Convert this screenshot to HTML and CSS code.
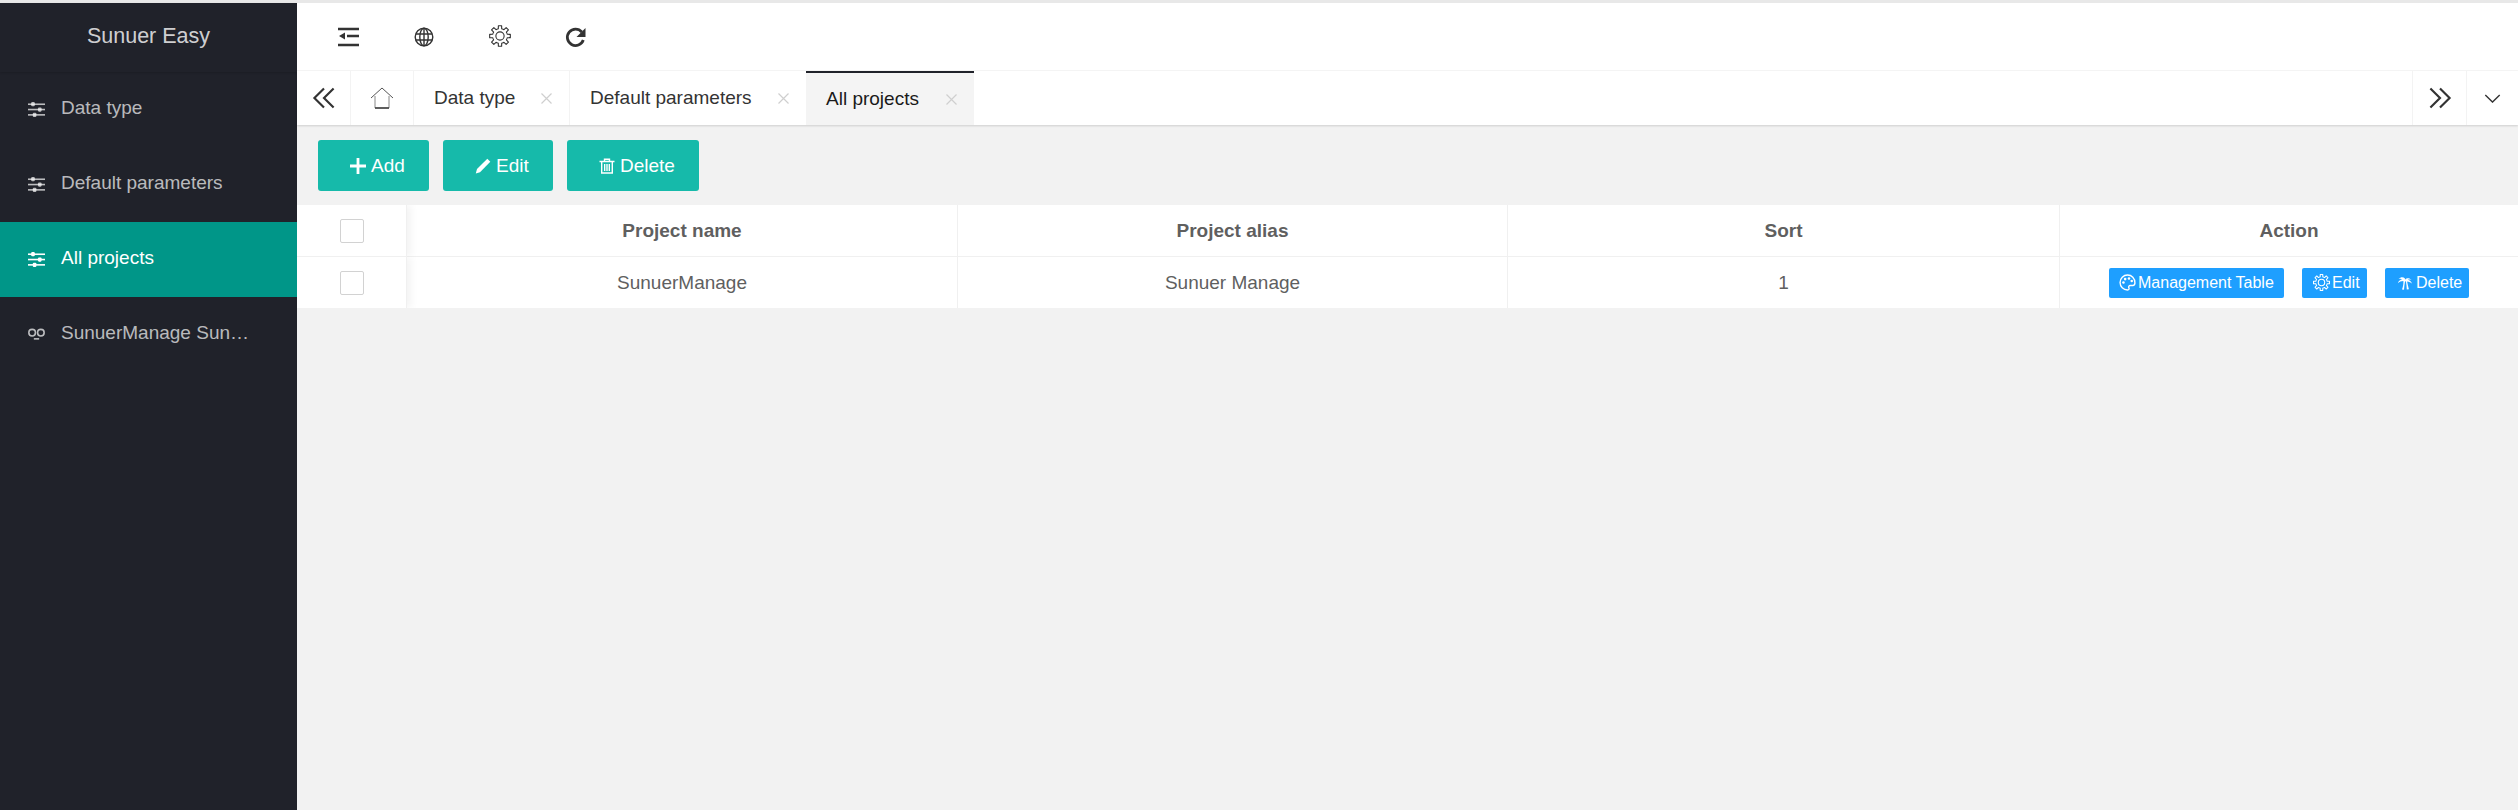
FILE: index.html
```html
<!DOCTYPE html>
<html lang="en">
<head>
<meta charset="utf-8">
<title>Sunuer Easy</title>
<link rel="stylesheet" href="styles.css">
</head>
<body>
<svg class="defs" aria-hidden="true"><defs>
  <symbol id="sliders" viewBox="0 0 16 16"><g fill="currentColor"><rect x="0" y="2.300" width="16" height="1.500"/><rect x="0" y="7.300" width="16" height="1.500"/><rect x="0" y="12.300" width="16" height="1.500"/><rect x="3" y="1" width="3.400" height="4" rx="1"/><rect x="9.400" y="6" width="3.400" height="4" rx="1"/><rect x="4.500" y="11" width="3.400" height="4" rx="1"/></g></symbol>
  <symbol id="gear" viewBox="0 0 24 24"><g transform="translate(12 12)" stroke-linejoin="round">
    <circle r="4.500"/>
    <path id="tooth" d="M-3.060-7.390L-1.840-7.990L-1.780-11.260L1.780-11.260L1.840-7.990L3.060-7.390"/>
    <use href="#tooth" transform="rotate(45)"/><use href="#tooth" transform="rotate(90)"/><use href="#tooth" transform="rotate(135)"/><use href="#tooth" transform="rotate(180)"/><use href="#tooth" transform="rotate(225)"/><use href="#tooth" transform="rotate(270)"/><use href="#tooth" transform="rotate(315)"/>
  </g></symbol>
  <symbol id="close" viewBox="0 0 11 11"><path d="M.5.500l10 10M10.500.500l-10 10" fill="none" stroke="#cfcfcf" stroke-width="1.200"/></symbol>
</defs></svg>
<div class="app">
  <aside class="side">
    <div class="logo">Sunuer Easy</div>
    <nav class="menu">
      <a class="item"><svg class="mi" viewBox="0 0 16 16"><use href="#sliders"/></svg><span class="lbl">Data type</span></a>
      <a class="item"><svg class="mi" viewBox="0 0 16 16"><use href="#sliders"/></svg><span class="lbl">Default parameters</span></a>
      <a class="item on"><svg class="mi" viewBox="0 0 16 16"><use href="#sliders"/></svg><span class="lbl">All projects</span></a>
      <a class="item"><svg class="mi" viewBox="0 0 16 16"><g fill="none" stroke="currentColor" stroke-width="1.500"><circle cx="3.900" cy="6.300" r="3.100"/><circle cx="12.100" cy="6.300" r="3.100"/><path d="M5.500 12.100h5"/></g></svg><span class="lbl">SunuerManage Sun…</span></a>
    </nav>
  </aside>
  <main class="main">
    <header class="top">
      <svg class="ti" viewBox="0 0 22 22"><path d="M1 4h21M10 11h12M1 20h21" fill="none" stroke="#333" stroke-width="2.300"/><path d="M2 11l6-3.500v7z" fill="#333"/></svg>
      <svg class="ti" viewBox="0 0 22 22"><g fill="none" stroke="#333" stroke-width="1.400"><circle cx="11" cy="12" r="8.800"/><ellipse cx="11" cy="12" rx="4.200" ry="8.800"/><path d="M11 3v18M3 9h16M3 15h16"/></g></svg>
      <svg class="ti gear-top" viewBox="0 0 22 22"><use href="#gear" width="22" height="22"/></svg>
      <svg class="ti" viewBox="0 0 22 22"><path d="M18.300 15A8.200 8.200 0 1 1 16.800 7" fill="none" stroke="#333" stroke-width="2.800"/><path d="M20.500 3v9h-9z" fill="#333"/></svg>
    </header>
    <div class="tabs">
      <button class="tb first"><svg class="arrows" viewBox="0 0 20 20"><path d="M10 2L2 10l8 8M18 2l-8 8 8 8" fill="none" stroke="#333" stroke-width="1.800"/></svg></button>
      <button class="tb home"><svg class="homei" viewBox="0 0 24 22"><path d="M1 11L12 1l11 10" fill="none" stroke="#555" stroke-width="1"/><path d="M5 9v12h14V9" fill="none" stroke="#888" stroke-width="1"/><path d="M5 21h14" stroke="#333" stroke-width="1.400"/></svg></button>
      <div class="tab one">Data type<svg class="x"><use href="#close"/></svg></div>
      <div class="tab two">Default parameters<svg class="x"><use href="#close"/></svg></div>
      <div class="tab cur">All projects<svg class="x"><use href="#close"/></svg></div>
      <div class="spacer"></div>
      <button class="tb next"><svg class="arrows" viewBox="0 0 20 20"><path d="M10 2l8 8-8 8M2 2l8 8-8 8" fill="none" stroke="#333" stroke-width="1.800"/></svg></button>
      <button class="tb more"><svg class="chev" viewBox="0 0 18 10"><path d="M1 1l8 8 8-8" fill="none" stroke="#333" stroke-width="1.500"/></svg></button>
    </div>
    <div class="content">
      <div class="toolbar">
        <button class="btn add"><svg class="bi" viewBox="0 0 16 16"><path d="M8 0v16M0 8h16" stroke="#fff" stroke-width="2.800"/></svg>Add</button>
        <button class="btn edit"><svg class="bi" viewBox="0 0 16 16"><path d="M12.300.800l3 3L5 14.200.800 15.400 2 11z" fill="#fff"/></svg>Edit</button>
        <button class="btn del"><svg class="bi" viewBox="0 0 16 16"><path d="M.500 3.500h15M5.500 3V1.200h5V3M2.700 3.500v11.500h10.600V3.500M5.700 6v7M8 6v7M10.300 6v7" fill="none" stroke="#fff" stroke-width="1.400"/></svg>Delete</button>
      </div>
      <table class="grid">
        <colgroup><col class="c0"><col class="c1"><col class="c2"><col class="c3"><col class="c4"></colgroup>
        <thead>
          <tr><th class="chk"><span class="box"></span></th><th>Project name</th><th>Project alias</th><th>Sort</th><th>Action</th></tr>
        </thead>
        <tbody>
          <tr>
            <td class="chk"><span class="box"></span></td><td>SunuerManage</td><td>Sunuer Manage</td><td>1</td>
            <td>
              <div class="acts">
                <button class="xs a1"><svg class="xi" viewBox="0 0 16 16"><path d="M8 1a7 7 0 0 0 0 14c1.500 0 1.800-1 1.300-1.900-.6-1.100 0-2.300 1.400-2.300h2.300c1.300 0 2-1 2-2.300C15 4 12 1 8 1z" fill="none" stroke="#fff" stroke-width="1.300"/><g fill="#fff"><circle cx="4.200" cy="8" r="1.200"/><circle cx="5.800" cy="4.800" r="1.200"/><circle cx="9.400" cy="4.300" r="1.200"/><circle cx="12" cy="6.600" r="1.200"/></g></svg>Management Table</button>
                <button class="xs a2"><svg class="xi small-gear" viewBox="0 0 24 24"><use href="#gear" width="24" height="24"/></svg>Edit</button>
                <button class="xs a3"><svg class="xi" viewBox="0 0 16 16"><path d="M7.500 4.300C6 2.600 3.500 2.600 1.500 4.700c1.400-.3 2.500-.2 3.300.3C3.200 5.300 1.600 6.500.8 8.600c1.500-1.300 3.200-2 5.200-2 .2 2.300-.2 5-1.300 7.900l1.900.3c.2-2.700.5-5.200 1-7.900l.8.100c.4 2.600.8 5 .8 7.500l2-.2c-.7-2.700-1.300-5-1.700-7.200 1.900.2 3.400.9 4.700 2.100-.7-2.100-2.300-3.300-4-3.700 1-.4 2.200-.4 3.500.2-1.800-2.200-4.300-2.400-6.200-.4z" fill="#fff"/></svg>Delete</button>
              </div>
            </td>
          </tr>
        </tbody>
      </table>
    </div>
  </main>
</div>
</body>
</html>
```
FILE: styles.css
```css
* { box-sizing: border-box; }
html, body { margin: 0; height: 100%; overflow: hidden; }
body { font-family: "Liberation Sans", Arial, sans-serif; color: #333; background: #f2f2f2; }
button { font-family: inherit; border: 0; padding: 0; background: none; }
.defs { position: absolute; width: 0; height: 0; }
.app { display: flex; height: 810px; padding-top: 3px; background: #e8e8e8; }
.side { width: 297px; flex: none; background: #20222a; }
.logo { height: 69px; line-height: 66px; text-align: center; font-size: 21.500px; color: rgba(255,255,255,.8); box-shadow: 0 1px 2px rgba(0,0,0,.15); }
.menu { display: flex; flex-direction: column; }
.item { height: 75px; display: flex; align-items: center; padding-left: 28px; color: rgba(255,255,255,.7); font-size: 19px; }
.item.on { background: #009688; color: #fff; }
.mi { width: 17px; height: 17px; flex: none; margin-right: 16px; }
.lbl { padding-bottom: 3px; white-space: nowrap; }
.main { flex: 1; min-width: 0; display: flex; flex-direction: column; background: #f2f2f2; }
.top { height: 68px; background: #fff; display: flex; align-items: center; padding-left: 40px; padding-bottom: 2px; gap: 54px; border-bottom: 1px solid #f6f6f6; }
.ti { width: 22px; height: 22px; flex: none; overflow: visible; }
.gear-top { fill: none; stroke: #333; stroke-width: 1.200; }
.tabs { height: 54px; background: #fff; display: flex; align-items: stretch; box-shadow: 0 1px 2px rgba(0,0,0,.15); position: relative; font-size: 19px; }
.tb { display: flex; align-items: center; justify-content: center; flex: none; }
.first { width: 54px; border-right: 1px solid #f3f3f3; }
.home { width: 63px; border-right: 1px solid #f3f3f3; }
.next { width: 54px; border-left: 1px solid #f3f3f3; }
.more { width: 52px; border-left: 1px solid #f3f3f3; }
.arrows { width: 24px; height: 24px; }
.homei { width: 24px; height: 22px; }
.chev { width: 17px; height: 9px; }
.tab { display: flex; align-items: center; justify-content: space-between; flex: none; padding: 0 17px 0 20px; }
.one { width: 156px; border-right: 1px solid #f3f3f3; }
.two { width: 236px; }
.cur { width: 168px; background: #f4f4f4; color: #1a1a1a; border-top: 2px solid #20222a; }
.x { width: 11px; height: 11px; flex: none; }
.spacer { flex: 1; }
.content { flex: 1; }
.toolbar { display: flex; gap: 14px; padding: 15px 21px 14px; }
.btn { height: 51px; background: #16baaa; color: #fff; border-radius: 3px; font-size: 19px; display: flex; align-items: center; padding-left: 32px; }
.add { width: 111px; }
.edit { width: 110px; }
.del { width: 132px; }
.bi { width: 16px; height: 16px; margin-right: 5px; flex: none; }
.grid { width: 100%; table-layout: fixed; border-collapse: separate; border-spacing: 0; background: #fff; }
.c0 { width: 110px; }
.c1 { width: 551px; }
.c2 { width: 550px; }
.c3 { width: 552px; }
th, td { height: 52px; padding: 0; text-align: center; font-size: 19px; color: #5f5f5f; border-right: 1px solid #f0f0f0; border-bottom: 1px solid #f0f0f0; }
th:last-child, td:last-child { border-right: 0; }
td { height: 51px; border-bottom: 0; }
th { font-weight: 700; }
.chk { position: relative; box-shadow: 4px 0 8px rgba(0,0,0,.05); clip-path: inset(0 -14px 0 0); padding-left: 1px; }
.box { display: block; width: 24px; height: 24px; margin: 0 auto; background: #fff; border: 1px solid #d2d2d2; border-radius: 2px; }
.acts { display: flex; gap: 18px; padding-left: 49px; }
.xs { height: 30px; background: #1e9fff; color: #fff; border-radius: 2px; font-size: 16px; display: flex; align-items: center; flex: none; }
.a1 { width: 175px; padding-left: 10px; }
.a2 { width: 65px; padding-left: 11px; }
.a3 { width: 84px; padding-left: 12px; }
.xi { width: 17px; height: 17px; margin-right: 2px; flex: none; }
.small-gear { fill: none; stroke: #fff; stroke-width: 1.500; }
```
